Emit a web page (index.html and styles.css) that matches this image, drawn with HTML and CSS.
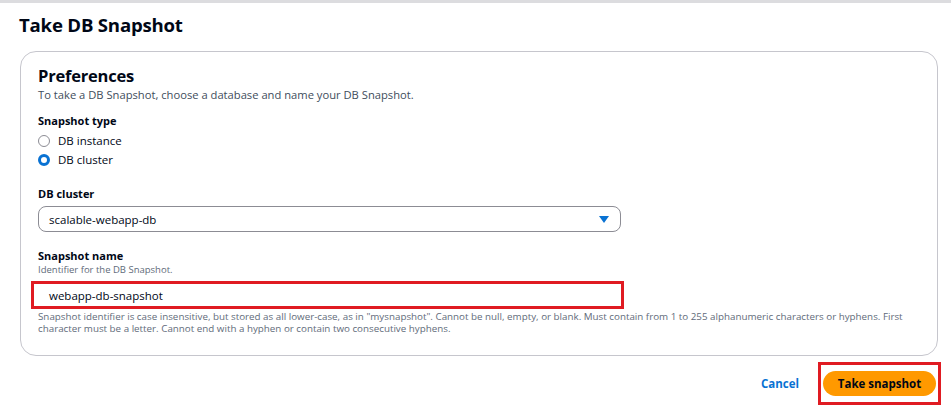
FILE: index.html
```html
<!DOCTYPE html>
<html>
<head>
<meta charset="utf-8">
<link rel="stylesheet" href="styles.css">
</head>
<body>
<div class="topline"></div>
<main class="page">
  <h1 class="title">Take DB Snapshot</h1>
  <section class="card">
    <h2 class="card-title">Preferences</h2>
    <p class="card-desc">To take a DB Snapshot, choose a database and name your DB Snapshot.</p>

    <div class="field type-field">
      <div class="label">Snapshot type</div>
      <div class="radios">
        <label class="radio"><span class="dot"></span>DB instance</label>
        <label class="radio"><span class="dot checked"></span>DB cluster</label>
      </div>
    </div>

    <div class="field cluster-field">
      <div class="label">DB cluster</div>
      <div class="select">
        <span>scalable-webapp-db</span>
        <svg class="caret" width="10" height="7" viewBox="0 0 10 7"><path d="M0 0H10L5 7Z" fill="#0972d3"/></svg>
      </div>
    </div>

    <div class="field name-field">
      <div class="label">Snapshot name</div>
      <div class="sub">Identifier for the DB Snapshot.</div>
      <div class="highlight input-wrap">
        <div class="input">webapp-db-snapshot</div>
      </div>
      <div class="help">Snapshot identifier is case insensitive, but stored as all lower-case, as in "mysnapshot". Cannot be null, empty, or blank. Must contain from 1 to 255 alphanumeric characters or hyphens. First character must be a letter. Cannot end with a hyphen or contain two consecutive hyphens.</div>
    </div>
  </section>

  <div class="actions">
    <a class="cancel">Cancel</a>
    <div class="highlight btn-wrap">
      <button class="primary">Take snapshot</button>
    </div>
  </div>
</main>
</body>
</html>
```
FILE: styles.css
```css
* { box-sizing: border-box; }
html, body { margin: 0; padding: 0; background: #fff; }
body {
  font-family: "Open Sans", "Noto Sans", sans-serif;
  color: #000716;
  width: 951px;
  height: 405px;
  overflow: hidden;
}
.topline { height: 3px; background: #dcdcdf; }
.page { padding: 0 10px 0 19px; }
.title {
  margin: 8px 0 0 0;
  font-size: 18.6px;
  font-weight: 700;
  line-height: 28px;
  letter-spacing: -0.2px;
}
.card {
  margin: 12px 0 0 1px;
  width: 918px;
  border: 1px solid #c6c6cd;
  border-radius: 16px;
  padding: 13px 17px 20px 17px;
}
.card-title {
  margin: 0;
  font-size: 16.5px;
  font-weight: 700;
  line-height: 22px;
  letter-spacing: -0.2px;
}
.card-desc {
  margin: 0;
  font-size: 11.2px;
  line-height: 15px;
  color: #414d5c;
}
.field { margin-top: 11px; }
.type-field { margin-top: 11px; }
.label {
  font-size: 11px;
  font-weight: 700;
  line-height: 16px;
}
.radios { display: flex; flex-direction: column; margin-top: 2px; }
.radio {
  display: flex;
  align-items: center;
  gap: 8px;
  font-size: 11.5px;
  line-height: 19px;
}
.dot {
  width: 12px; height: 12px;
  border-radius: 50%;
  border: 1.5px solid #8c8c94;
  background: #fff;
}
.dot.checked { border: 3.5px solid #0972d3; }
.cluster-field { margin-top: 17px; }
.select {
  margin-top: 4px;
  width: 583px;
  height: 26px;
  border: 1px solid #8c8c94;
  border-radius: 8px;
  display: flex;
  align-items: center;
  justify-content: space-between;
  padding: 0 11px 0 10px;
  font-size: 11.5px;
}
.caret { display: block; }
.name-field { margin-top: 16px; }
.sub {
  font-size: 9.5px;
  line-height: 12px;
  color: #5f6b7a;
}
.highlight { border: 3px solid #e01b22; }
.input-wrap {
  margin: 5px 0 0 -7px;
  width: 593px;
  height: 28px;
  display: flex;
  align-items: center;
  padding-left: 15px;
}
.input { font-size: 11.5px; }
.help {
  margin-top: 2px;
  font-size: 9.8px;
  line-height: 12px;
  color: #5f6b7a;
  width: 880px;
}
.actions {
  display: flex;
  justify-content: flex-end;
  align-items: center;
  margin-top: 6px;
}
.cancel {
  color: #0972d3;
  font-weight: 700;
  font-size: 11.5px;
  margin-right: 19px;
}
.btn-wrap {
  width: 123px;
  height: 43px;
  display: flex;
  align-items: center;
  justify-content: center;
}
.primary {
  width: 113px;
  height: 25px;
  border: none;
  border-radius: 13px;
  background: #ff9900;
  color: #000716;
  font-family: inherit;
  font-weight: 700;
  font-size: 11.5px;
  padding: 0;
}
```
